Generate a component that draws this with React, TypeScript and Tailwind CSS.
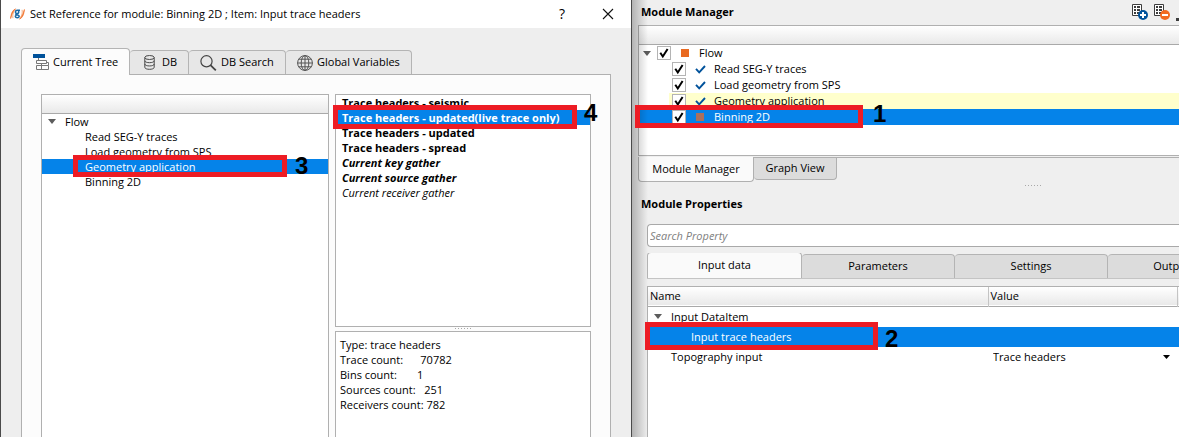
import React from "react";

type MarkProps = { label: string; box: string; digit: string };

/* Numbered red call-out laid over a selected row. */
function Mark({ label, box, digit }: MarkProps) {
  return (
    <>
      <span className={`pointer-events-none absolute z-20 border-5 border-[#ed1c24] ${box}`} />
      <span
        className={`pointer-events-none absolute z-20 font-['Liberation_Sans',sans-serif] text-2xl leading-none font-bold text-black ${digit}`}
      >
        {label}
      </span>
    </>
  );
}

function Expander() {
  return (
    <svg width="8" height="5" viewBox="0 0 8 5" className="shrink-0" aria-hidden="true">
      <path d="M0 0H8L4 5Z" fill="#5c5c5c" />
    </svg>
  );
}

function Grip() {
  return (
    <svg width="17" height="2" viewBox="0 0 17 2" aria-hidden="true">
      {[0, 3, 6, 9, 12, 15].map((x) => (
        <rect key={x} x={x} y="0" width="1" height="1" fill="#a8a8a8" />
      ))}
    </svg>
  );
}

function Logo() {
  return (
    <svg width="15" height="12" viewBox="0 0 15 12" className="shrink-0" aria-hidden="true">
      <path d="M5.500 .8C2.500 2.200 1 5.500 .6 10.500C1.600 6.500 3 4 5.500 .8Z" fill="#f0702a" stroke="#f0702a" strokeWidth=".7" />
      <path d="M2.900 10.200C2.500 7 3 5 4.200 3" fill="none" stroke="#f39a62" strokeWidth=".8" />
      <path d="M9.500 11.200C12.500 9.800 14 6.500 14.400 1.500C13.400 5.500 12 8 9.500 11.200Z" fill="#f0702a" stroke="#f0702a" strokeWidth=".7" />
      <path d="M12.100 1.800C12.500 5 12 7 10.800 9" fill="none" stroke="#f39a62" strokeWidth=".8" />
      <path
        d="M10 2.300H7.200C4.900 2.300 4.900 5.500 7.200 5.500C9.400 5.500 9.300 2.500 7.400 2.300M6.200 5.500C5.200 6.800 6.200 7.100 7.400 7.100C10 7.100 9.600 9.700 7.300 9.700C4.900 9.700 4.800 7.800 6.400 7.100"
        fill="none"
        stroke="#1b6aa5"
        strokeWidth="1.500"
      />
    </svg>
  );
}

function TreeIcon() {
  return (
    <svg width="16" height="16" viewBox="0 0 16 16" className="shrink-0" aria-hidden="true">
      <rect x="0" y="0" width="12" height="4" fill="#00529b" />
      <path
        d="M5.500 4V6.500M3.500 6.500H13.500V9.500H3.500ZM8.500 9.500V11.500M3.500 11.500H15.500V15.500H3.500ZM8.500 11.500V15.500M15.500 11.500V8.500H13.500"
        fill="none"
        stroke="#777"
      />
    </svg>
  );
}

function DbIcon() {
  return (
    <svg width="11" height="15" viewBox="0 0 11 15" className="shrink-0" aria-hidden="true">
      <g fill="none" stroke="#4a4a4a" strokeWidth="1">
        <ellipse cx="5.500" cy="2.500" rx="4.700" ry="2" />
        <path d="M.8 2.500V12.300C.8 15 10.200 15 10.200 12.300V2.500M.8 5.800C.8 8.300 10.200 8.300 10.200 5.800M.8 9C.8 11.600 10.200 11.600 10.200 9" />
      </g>
    </svg>
  );
}

function SearchIcon() {
  return (
    <svg width="17" height="16" viewBox="0 0 17 16" className="shrink-0" aria-hidden="true">
      <circle cx="6.500" cy="6.300" r="5.600" fill="none" stroke="#444" strokeWidth="1.200" />
      <path d="M10.500 10.200L15.800 15.300" stroke="#444" strokeWidth="1.800" />
    </svg>
  );
}

function GlobeIcon() {
  return (
    <svg width="16" height="16" viewBox="0 0 16 16" className="shrink-0" aria-hidden="true">
      <g fill="none" stroke="#555" strokeWidth="1">
        <circle cx="8" cy="8" r="7.400" />
        <ellipse cx="8" cy="8" rx="3.800" ry="7.400" />
        <path d="M8 .5V15.500M.5 8H15.500M1.800 4.200H14.200M1.800 11.800H14.200" />
      </g>
    </svg>
  );
}

function SheetIcon({ kind }: { kind: "add" | "remove" }) {
  return (
    <svg width="16" height="17" viewBox="0 0 16 17" aria-hidden="true">
      <path d="M.5 .5H9.500V11.500H.5Z" fill="#fff" stroke="#3c3c3c" />
      <path
        d="M2 2H4V4H2ZM5 2H8V4H5ZM2 5H4V7H2ZM5 5H8V7H5ZM2 8H4V10H2ZM5 8H7V10H5Z"
        fill="#3c3c3c"
      />
      <circle cx="11" cy="11" r="5" fill={kind === "add" ? "#00529b" : "#f26b21"} />
      <path d={kind === "add" ? "M8 11H14M11 8V14" : "M8 11H14"} stroke="#fff" strokeWidth="2" />
    </svg>
  );
}

function Check({ label }: { label: string }) {
  return (
    <span className="relative flex size-[14px] shrink-0">
      <input
        type="checkbox"
        defaultChecked
        aria-label={label}
        className="peer size-[14px] appearance-none border border-[#b4b4b4] bg-white"
      />
      <svg
        viewBox="0 0 14 14"
        className="pointer-events-none absolute inset-0 hidden size-[14px] peer-checked:block"
        aria-hidden="true"
      >
        <path d="M3.300 6.800L5.800 10.500L10.600 3" fill="none" stroke="#000" strokeWidth="2" />
      </svg>
    </span>
  );
}

function DoneMark() {
  return (
    <svg width="11" height="9" viewBox="0 0 11 9" className="shrink-0" aria-hidden="true">
      <path d="M1 3.800L4.200 7.300L10 1" fill="none" stroke="#00529b" strokeWidth="1.900" />
    </svg>
  );
}

const sources = [
  { name: "Current Tree", icon: <TreeIcon />, style: "w-[109px] pl-[11px] gap-1" },
  { name: "DB", icon: <DbIcon />, style: "w-[59px] pl-3.5 gap-[7px]" },
  { name: "DB Search", icon: <SearchIcon />, style: "w-[97px] pl-[11px] gap-1" },
  { name: "Global Variables", icon: <GlobeIcon />, style: "w-[126px] pl-[11px] gap-1" },
];

const headers = [
  { name: "Trace headers - seismic", style: "font-bold" },
  { name: "Trace headers - updated(live trace only)", style: "font-bold bg-[#0583e9] text-white", on: true },
  { name: "Trace headers - updated", style: "font-bold" },
  { name: "Trace headers - spread", style: "font-bold" },
  { name: "Current key gather", style: "font-bold italic" },
  { name: "Current source gather", style: "font-bold italic" },
  { name: "Current receiver gather", style: "italic" },
];

const headBar = "border-b border-[#a9a9a9] bg-linear-to-b from-white to-[#e9e9e9]";

function ReferenceDialog() {
  return (
    <section className="flex min-w-0 flex-col border-x border-[#4a4a4a] bg-[#eee]">
      <header className="flex h-7 items-center bg-white pr-[17px] pl-[9px]">
        <Logo />
        <h1 className="ml-[5px] flex-1 truncate">
          Set Reference for module: Binning 2D ; Item: Input trace headers
        </h1>
        <button type="button" aria-label="Help" className="w-4 text-sm">
          ?
        </button>
        <button type="button" aria-label="Close" className="ml-8">
          <svg width="12" height="12" viewBox="0 0 12 12" aria-hidden="true">
            <path d="M1 1L11 11M11 1L1 11" stroke="#111" strokeWidth="1.100" />
          </svg>
        </button>
      </header>
      <div className="flex flex-1 flex-col px-5 pt-5">
        <div className="flex h-[26px] items-end" role="tablist">
          {sources.map((s, i) => (
            <button
              key={s.name}
              type="button"
              role="tab"
              aria-selected={i === 0}
              className={`flex shrink-0 items-center rounded-t-sm border-t border-r border-[#b4b4b4] whitespace-nowrap ${s.style} ${
                i === 0 ? "z-10 -mb-px h-[27px] border-l bg-[#fcfcfc]" : "h-6 bg-[#e7e7e7]"
              }`}
            >
              {s.icon}
              {s.name}
            </button>
          ))}
        </div>
        <div className="flex flex-1 gap-1.5 border border-b-0 border-[#b0b0b0] bg-[#fcfcfc] px-[19px] pt-[19px]">
          <div className="min-w-0 flex-[286] border border-b-0 border-[#b0b0b0] bg-white">
            <div className={`h-[19px] ${headBar}`} />
            <ul className="leading-[15px] whitespace-nowrap">
              <li className="flex items-center gap-[9px] pl-1.5">
                <Expander />
                Flow
              </li>
              <li className="pl-[43px]">Read SEG-Y traces</li>
              <li className="pl-[43px]">Load geometry from SPS</li>
              <li className="relative bg-[#0583e9] pl-[43px] text-white">
                Geometry application
                <Mark label="3" box="left-[31px] -top-1 h-[22px] w-[214px]" digit="left-[253px] -top-[5px]" />
              </li>
              <li className="pl-[43px]">Binning 2D</li>
            </ul>
          </div>
          <div className="flex min-w-0 flex-[256] flex-col">
            <ul className="h-[233px] border border-[#b0b0b0] bg-white leading-[15px] whitespace-nowrap">
              {headers.map((h) => (
                <li key={h.name} className={`relative pl-1.5 ${h.style}`}>
                  {h.name}
                  {h.on && <Mark label="4" box="-left-[3px] -top-[5px] h-6 w-[244px]" digit="left-[248px] -top-[9px]" />}
                </li>
              ))}
            </ul>
            <div className="flex h-1 items-center justify-center">
              <Grip />
            </div>
            <div className="flex-1 border border-b-0 border-[#b0b0b0] bg-white px-1 py-[5px] leading-[15px] whitespace-pre">
              <p>Type: trace headers</p>
              <p>{"Trace count:      70782"}</p>
              <p>{"Bins count:       1"}</p>
              <p>{"Sources count:   251"}</p>
              <p>Receivers count: 782</p>
            </div>
          </div>
        </div>
      </div>
    </section>
  );
}

const modules = ["Read SEG-Y traces", "Load geometry from SPS", "Geometry application", "Binning 2D"];
const moduleRow = ["", "", "bg-[#ffffcc]", "bg-[#0583e9] text-white"];

function ModulePanel() {
  return (
    <section className="relative flex min-w-0 flex-col bg-[#efefef]">
      <div className="pointer-events-none absolute inset-y-0 left-0 z-10 w-4 bg-linear-to-r from-black/25 to-transparent" />
      <div className="flex h-[25px] items-center pl-[9px]">
        <h2 className="flex-1 font-bold">Module Manager</h2>
        <div className="flex items-center gap-1.5">
          <button type="button" aria-label="Add module">
            <SheetIcon kind="add" />
          </button>
          <button type="button" aria-label="Remove module">
            <SheetIcon kind="remove" />
          </button>
          <span className="h-[3px] w-[3px] self-end bg-[#3c3c3c]" />
        </div>
      </div>
      <div className="ml-1.5 h-[131px] border-y border-l border-[#b0b0b0] bg-white">
        <div className={`h-[19px] ${headBar}`} />
        <ul className="leading-4 whitespace-nowrap">
          <li className="flex h-4 items-center pl-1">
            <Expander />
            <span className="ml-1.5 flex">
              <Check label="Flow" />
            </span>
            <span className="mr-2.5 ml-2.5 size-2 bg-[#e96a21]" />
            Flow
          </li>
          {modules.map((m, i) => (
            <li key={m} className={`relative flex h-4 ${i === 3 ? "bg-[#0583e9]" : ""}`}>
              <div className={`ml-[30px] flex flex-1 items-center pl-[3px] ${moduleRow[i]}`}>
                <Check label={m} />
                <span className="mr-2 ml-2 flex w-3 justify-center">
                  {i < 3 ? <DoneMark /> : <span className="size-2 bg-[#a9705f]" />}
                </span>
                {m}
              </div>
              {i === 3 && <Mark label="1" box="-left-1 -top-1 h-[23px] w-[228px]" digit="left-[234px] -top-[7px]" />}
            </li>
          ))}
        </ul>
      </div>
      <div className="mt-px ml-1.5 flex h-[25px] items-start border-t border-[#b0b0b0]" role="tablist">
        <button
          type="button"
          role="tab"
          aria-selected="true"
          className="-mt-px h-[25px] w-[116px] rounded-b-sm border-x border-b border-[#b0b0b0] bg-[#fafafa]"
        >
          Module Manager
        </button>
        <button
          type="button"
          role="tab"
          aria-selected="false"
          className="h-[22px] w-[83px] rounded-b-sm border-r border-b border-[#b0b0b0] bg-[#dcdcdc]"
        >
          Graph View
        </button>
      </div>
      <div className="flex h-2 items-center justify-center pl-64">
        <Grip />
      </div>
      <h2 className="mb-1.5 flex h-7 items-center pl-[9px] font-bold">Module Properties</h2>
      <div className="ml-[15px] flex flex-1 flex-col">
        <input
          type="text"
          aria-label="Search Property"
          placeholder="Search Property"
          className="h-[23px] w-full rounded-l-sm border-y border-l border-[#a9a9a9] bg-white px-0.5 placeholder:text-[#808080] placeholder:italic"
        />
        <div className="mt-1.5 flex h-[26px] items-end overflow-hidden border-b border-[#c4c4c4]" role="tablist">
          {["Input data", "Parameters", "Settings", "Output"].map((t, i) => (
            <button
              key={t}
              type="button"
              role="tab"
              aria-selected={i === 0}
              className={`shrink-0 rounded-t-sm border-t border-r border-[#b4b4b4] ${
                i === 0
                  ? "h-[26px] w-[155px] border-l bg-[#fafafa]"
                  : i === 3
                    ? "h-6 w-32 bg-[#dcdcdc]"
                    : "h-6 w-[153px] bg-[#dcdcdc]"
              }`}
            >
              {t}
            </button>
          ))}
        </div>
        <div className="mt-[7px] flex-1 border-t border-l border-[#b0b0b0] bg-white">
          <table className="w-full table-fixed border-collapse text-left whitespace-nowrap">
            <colgroup>
              <col className="w-[340px]" />
              <col />
              <col className="w-0.5" />
            </colgroup>
            <thead>
              <tr className={`h-[19px] ${headBar}`}>
                <th className="border-r border-[#c4c4c4] p-0 pl-0.5 leading-[18px] font-normal">Name</th>
                <th className="border-r border-[#c4c4c4] p-0 pl-0.5 leading-[18px] font-normal">Value</th>
                <th className="p-0" />
              </tr>
            </thead>
            <tbody>
              <tr className="h-5">
                <td className="p-0 leading-5" colSpan={3}>
                  <div className="flex items-center gap-[9px] pl-1.5">
                    <Expander />
                    Input DataItem
                  </div>
                </td>
              </tr>
              <tr className="h-5 bg-[#0583e9] text-white">
                <td className="p-0 leading-5" colSpan={3}>
                  <div className="relative pl-[43px]">
                    Input trace headers
                    <Mark label="2" box="-left-[3px] -top-[5px] h-7 w-[233px]" digit="left-[237px] top-0" />
                  </div>
                </td>
              </tr>
              <tr className="h-5">
                <td className="p-0 pl-[23px] leading-5">
                  <label htmlFor="topography">Topography input</label>
                </td>
                <td className="p-0 leading-5">
                  <div className="relative flex items-center">
                    <select id="topography" className="h-5 w-full appearance-none bg-transparent pl-[5px]">
                      <option>Trace headers</option>
                    </select>
                    <svg
                      width="7"
                      height="4"
                      viewBox="0 0 7 4"
                      className="pointer-events-none absolute right-[7px]"
                      aria-hidden="true"
                    >
                      <path d="M0 0H7L3.500 4Z" fill="#000" />
                    </svg>
                  </div>
                </td>
                <td className="p-0" />
              </tr>
            </tbody>
          </table>
        </div>
      </div>
    </section>
  );
}

export default function App() {
  return (
    <main className="grid min-h-screen grid-cols-[632fr_547fr] overflow-hidden font-['Open_Sans',sans-serif] text-[11px] text-black">
      <ReferenceDialog />
      <ModulePanel />
    </main>
  );
}
